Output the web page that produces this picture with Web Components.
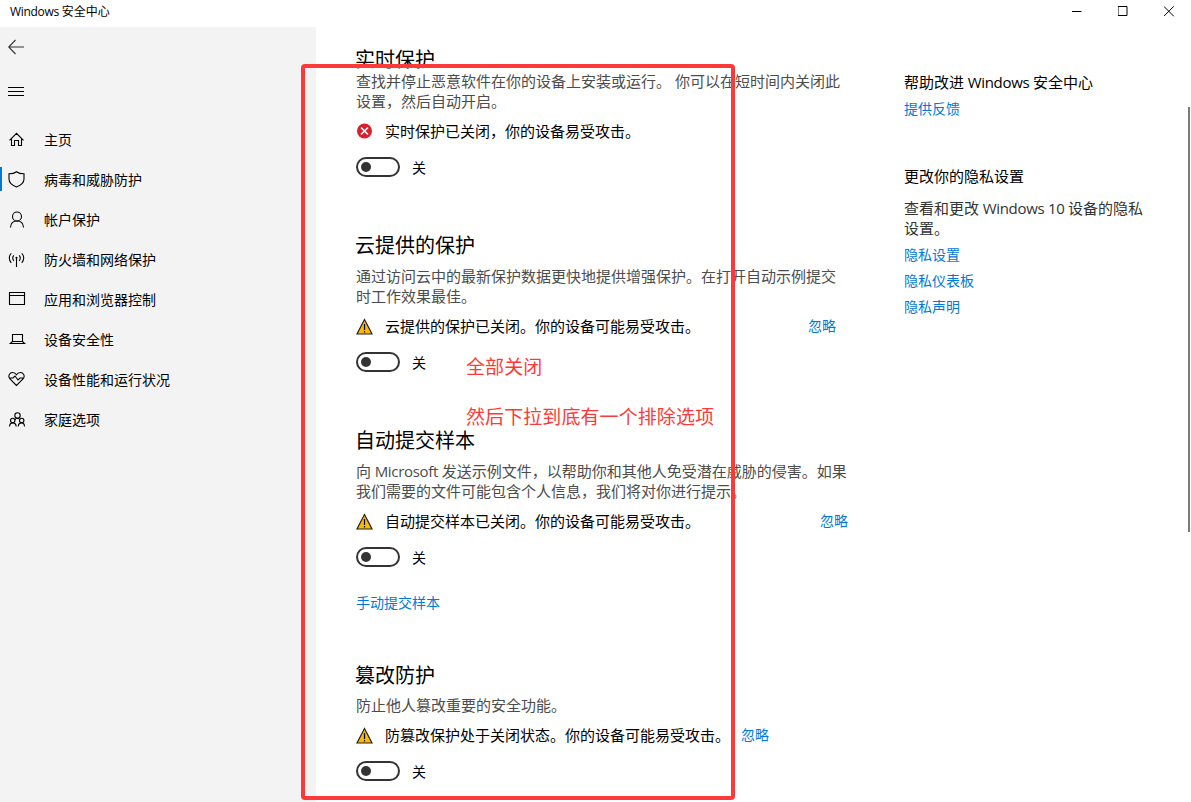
<!DOCTYPE html>
<html lang="zh-CN">
<head>
<meta charset="utf-8">
<title>Windows 安全中心</title>
<style>
    html, body {
        margin: 0;
        height: 100%;
        overflow: hidden;
        background: #fff;
    }
    body {
        font-family: "Open Sans", "Noto Sans CJK SC", sans-serif;
        font-size: 15px;
        line-height: 20px;
        color: #000;
    }
</style>
</head>
<body>
<security-app></security-app>

<script>
    const icons = {
        back: '<path d="M.5 8H16M7.500 1 .7 8l6.800 7" stroke="#333"/>',
        menu: '<path d="M0 4.500h16M0 8.500h16M0 12.500h16"/>',
        home: '<path d="M1.500 9.300 8.500 2.300l7 7M3.500 8v6.500h3v-5h4v5h3V8"/>',
        shield: '<path d="M8.500 .7C6.500 2.300 4 2.800 1 2.800V8c0 3.700 3 6.200 7.500 8C13 14.200 16 11.700 16 8V2.800c-3 0-5.500-.5-7.500-2.100z"/>',
        person: '<circle cx="9" cy="5.500" r="4.500"/><path d="M2.500 16.500c.2-3.900 2.800-6.500 6.500-6.500s6.300 2.600 6.500 6.500"/>',
        network: '<path d="M8.500 6.500V16M5.800 4.300c-1.200 1.500-1.200 4 0 5.500M11.200 4.300c1.200 1.500 1.200 4 0 5.500M3.300 2.300c-2.700 2.600-2.700 7 0 9.500M13.700 2.300c2.700 2.600 2.700 7 0 9.500"/><circle cx="8.500" cy="6.800" r=".5"/>',
        app: '<path d="M1.500 1.500h15v12h-15zM1.500 4.500h15"/>',
        laptop: '<path d="M4.500 3.500h10v7h-10zM4.500 10.500l-2.200 2h14.400l-2.200-2"/>',
        heart: '<path d="M8.500 14.500 2 8C-.5 5 1.500 1.500 4.700 1.500c1.800 0 3 1 3.800 2.300C9.300 2.500 10.500 1.500 12.300 1.500 15.500 1.500 17.500 5 15 8zM1.500 7H5l2-2 3 4 2-2h3"/>',
        family: '<circle cx="9.500" cy="4.500" r="2.700"/><circle cx="4.700" cy="9.500" r="2.200"/><circle cx="13.700" cy="9.500" r="2.200"/><path d="M1.500 15.500c.2-2.300 1.300-3.600 3.200-3.600s3.300 1.300 3.500 3.600M10.200 15.500c.2-2.300 1.400-3.600 3.500-3.600 1.700 0 2.700 1.300 2.800 3.600M6.800 9c.6-1.200 1.500-1.700 2.500-1.700s2 .5 2.600 1.700"/>'
    };

    const svg = (name, size = 18) =>
        `<svg width="${size}" height="${size}" viewBox="0 0 ${size} ${size}" fill="none" stroke="#000" stroke-width="1.100">${icons[name]}</svg>`;

    class TitleBar extends HTMLElement {
        connectedCallback() {
            this.attachShadow({mode: 'open'}).innerHTML = `
                <style>
                    :host {
                        display: flex;
                        justify-content: space-between;
                        height: 27px;
                        font-size: 12px;
                        line-height: 24px;
                        background: #fff;
                    }
                    .name { padding-left: 10px; }
                    .buttons { display: flex; height: 23px; margin-right: -1px; }
                    .buttons svg { padding: 6px 17.500px; fill: none; stroke: #000; }
                </style>
                <div class="name"><slot></slot></div>
                <div class="buttons">
                    <svg width="11" height="11"><path d="M0 5.500h10"/></svg>
                    <svg width="11" height="11"><path d="M.5 .5h9v9h-9z"/></svg>
                    <svg width="11" height="11"><path d="M.3 .3l10 10M10.300 .3l-10 10"/></svg>
                </div>
            `;
        }
    }

    // narrows Latin words that sit between Chinese characters
    class LatinText extends HTMLElement {
        connectedCallback() {
            this.attachShadow({mode: 'open'}).innerHTML = `
                <style>
                    :host { letter-spacing: -0.3px; }
                </style>
                <slot></slot>
            `;
        }
    }

    class NavItem extends HTMLElement {
        connectedCallback() {
            this.attachShadow({mode: 'open'}).innerHTML = `
                <style>
                    :host {
                        display: flex;
                        align-items: center;
                        height: 40px;
                        font-size: 14px;
                    }
                    .mark { width: 2px; height: 24px; margin: -2px 6px 0 0; }
                    :host([selected]) .mark { background: #0078d7; }
                    svg { display: block; width: 18px; margin-right: 18px; }
                </style>
                <span class="mark"></span>
                ${svg(this.getAttribute('icon'))}
                <slot></slot>
            `;
        }
    }

    class SideNav extends HTMLElement {
        constructor() {
            super();
            this.navItems = [
                {name: '主页', icon: 'home'},
                {name: '病毒和威胁防护', icon: 'shield', selected: true},
                {name: '帐户保护', icon: 'person'},
                {name: '防火墙和网络保护', icon: 'network'},
                {name: '应用和浏览器控制', icon: 'app'},
                {name: '设备安全性', icon: 'laptop'},
                {name: '设备性能和运行状况', icon: 'heart'},
                {name: '家庭选项', icon: 'family'}
            ];
        }
        connectedCallback() {
            let nav = '';
            this.navItems.forEach(item => {
                nav += `<nav-item icon="${item.icon}" ${item.selected ? 'selected' : ''}>${item.name}</nav-item>`;
            });
            this.attachShadow({mode: 'open'}).innerHTML = `
                <style>
                    :host {
                        display: block;
                        width: 316px;
                        flex: none;
                        background: #f3f3f3;
                    }
                    .top {
                        display: grid;
                        gap: 28px;
                        padding: 12px 0 0 8px;
                        height: 81px;
                        align-content: start;
                    }
                    .top svg { display: block; }
                </style>
                <div class="top">${svg('back', 16)}${svg('menu', 16)}</div>
                <nav>${nav}</nav>
            `;
        }
    }

    class TextLink extends HTMLElement {
        connectedCallback() {
            this.attachShadow({mode: 'open'}).innerHTML = `
                <style>
                    :host { display: block; font-size: 14px; }
                    a { color: #0078d7; text-decoration: none; }
                </style>
                <a href="#"><slot></slot></a>
            `;
        }
    }

    class ToggleSwitch extends HTMLElement {
        connectedCallback() {
            this.attachShadow({mode: 'open'}).innerHTML = `
                <style>
                    :host {
                        display: flex;
                        gap: 12px;
                        height: 20px;
                        font-size: 14px;
                        line-height: 22px;
                    }
                    .track {
                        box-sizing: border-box;
                        display: flex;
                        align-items: center;
                        width: 44px;
                        height: 20px;
                        padding-left: 3px;
                        border: 2px solid #333;
                        border-radius: 10px;
                    }
                    .knob { width: 10px; height: 10px; border-radius: 50%; background: #333; }
                </style>
                <span class="track"><span class="knob"></span></span>
                <slot></slot>
            `;
        }
    }

    class StatusIcon extends HTMLElement {
        connectedCallback() {
            const error = `
                <circle cx="8.500" cy="8" r="7.500" fill="#da1f2a"/>
                <path d="M5 4.500l7 7M12 4.500l-7 7" stroke="#fff" stroke-width="1.700"/>`;
            const warning = `
                <path d="M8.500 1.500 16 16H1z" fill="#ffb900" stroke="#222" stroke-width="1.200"/>
                <path d="M8.500 6v6M8.500 13v1.500" stroke="#000" stroke-width="1.200"/>`;
            this.attachShadow({mode: 'open'}).innerHTML = `
                <style>
                    :host { display: block; width: 17px; height: 17px; }
                    svg { display: block; }
                </style>
                <svg width="17" height="17" fill="none">${this.getAttribute('type') === 'error' ? error : warning}</svg>
            `;
        }
    }

    class ProtectionSection extends HTMLElement {
        connectedCallback() {
            const ignore = this.hasAttribute('ignorable') ? '<text-link>忽略</text-link>' : '';
            this.attachShadow({mode: 'open'}).innerHTML = `
                <style>
                    :host { display: block; width: var(--section-width, 492px); white-space: nowrap; }
                    h2 {
                        margin: 0 0 var(--heading-gap, 6px) -1px;
                        padding-top: var(--heading-top, 1px);
                        font-size: 20px;
                        font-weight: 400;
                        line-height: 28px;
                    }
                    .about { color: #4c4c4c; }
                    .status {
                        display: flex;
                        align-items: center;
                        height: 20px;
                        margin: 10px 0 16px;
                    }
                    status-icon { margin-right: 12px; }
                    text-link { margin-left: auto; }
                </style>
                <h2>${this.getAttribute('heading')}</h2>
                <div class="about"><slot></slot></div>
                <div class="status">
                    <status-icon type="${this.getAttribute('type')}"></status-icon>
                    <span>${this.getAttribute('status')}</span>
                    ${ignore}
                </div>
                <toggle-switch>关</toggle-switch>
                <slot name="more"></slot>
            `;
        }
    }

    class HelpPanel extends HTMLElement {
        connectedCallback() {
            this.attachShadow({mode: 'open'}).innerHTML = `
                <style>
                    :host { display: block; white-space: nowrap; }
                    h3 { margin: 0; font-size: 15px; font-weight: 400; }
                    p { margin: 12px 0 0; color: #333; }
                    text-link { margin-top: 6px; }
                    h3 + text-link, p + text-link { margin-top: 7px; }
                    .privacy { margin-top: 47px; }
                </style>
                <section>
                    <h3>帮助改进<latin-text> Windows </latin-text>安全中心</h3>
                    <text-link>提供反馈</text-link>
                </section>
                <section class="privacy">
                    <h3>更改你的隐私设置</h3>
                    <p>查看和更改<latin-text> Windows 10 </latin-text>设备的隐私<br>设置。</p>
                    <text-link>隐私设置</text-link>
                    <text-link>隐私仪表板</text-link>
                    <text-link>隐私声明</text-link>
                </section>
            `;
        }
    }

    // red frame and notes drawn over the window
    class MarkupLayer extends HTMLElement {
        connectedCallback() {
            this.attachShadow({mode: 'open'}).innerHTML = `
                <style>
                    :host {
                        position: absolute;
                        box-sizing: border-box;
                        left: 301px;
                        top: 64px;
                        width: 434px;
                        height: 736px;
                        border: 4px solid #fd3a3a;
                        border-radius: 4px;
                        color: #fd3a3a;
                        font-size: 19px;
                        letter-spacing: 0.08px;
                        line-height: 28px;
                        white-space: nowrap;
                        pointer-events: none;
                    }
                    .notes { display: grid; gap: 22px; padding: 285px 0 0 161px; }
                </style>
                <div class="notes">
                    <span>全部关闭</span>
                    <span>然后下拉到底有一个排除选项</span>
                </div>
            `;
        }
    }

    class SecurityApp extends HTMLElement {
        connectedCallback() {
            this.attachShadow({mode: 'open'}).innerHTML = `
                <style>
                    :host {
                        position: relative;
                        display: flex;
                        flex-direction: column;
                        height: 100vh;
                        overflow: hidden;
                    }
                    .body { display: flex; flex: 1; min-height: 0; }
                    main { display: flex; flex: 1; padding-left: 40px; }
                    .sections { width: 548px; padding-top: 17px; flex: none; }
                    protection-section { margin-bottom: 54px; }
                    .realtime { --heading-top: 2px; --heading-gap: -3px; }
                    .cloud { --section-width: 480px; }
                    .samples { margin-bottom: 48px; }
                    .tamper { --section-width: 413px; --heading-gap: 5px; }
                    .samples text-link { margin-top: 26px; }
                    help-panel { padding-top: 45px; }
                    .scroll {
                        width: 2px;
                        height: 425px;
                        margin: 80px 1px 0 auto;
                        background: #7a7a7a;
                    }
                </style>
                <title-bar><latin-text>Windows </latin-text>安全中心</title-bar>
                <div class="body">
                    <side-nav></side-nav>
                    <main>
                        <div class="sections">
                            <protection-section class="realtime" type="error" heading="实时保护"
                                status="实时保护已关闭，你的设备易受攻击。">查找并停止恶意软件在你的设备上安装或运行。 你可以在短时间内关闭此<br>设置，然后自动开启。</protection-section>
                            <protection-section class="cloud" type="warning" heading="云提供的保护" ignorable
                                status="云提供的保护已关闭。你的设备可能易受攻击。">通过访问云中的最新保护数据更快地提供增强保护。在打开自动示例提交<br>时工作效果最佳。</protection-section>
                            <protection-section class="samples" type="warning" heading="自动提交样本" ignorable
                                status="自动提交样本已关闭。你的设备可能易受攻击。">向<latin-text> Microsoft </latin-text>发送示例文件，以帮助你和其他人免受潜在威胁的侵害。如果<br>我们需要的文件可能包含个人信息，我们将对你进行提示。<text-link slot="more">手动提交样本</text-link></protection-section>
                            <protection-section class="tamper" type="warning" heading="篡改防护" ignorable
                                status="防篡改保护处于关闭状态。你的设备可能易受攻击。">防止他人篡改重要的安全功能。</protection-section>
                        </div>
                        <help-panel></help-panel>
                        <div class="scroll"></div>
                    </main>
                </div>
                <markup-layer></markup-layer>
            `;
        }
    }

    customElements.define('latin-text', LatinText);
    customElements.define('title-bar', TitleBar);
    customElements.define('nav-item', NavItem);
    customElements.define('side-nav', SideNav);
    customElements.define('text-link', TextLink);
    customElements.define('toggle-switch', ToggleSwitch);
    customElements.define('status-icon', StatusIcon);
    customElements.define('protection-section', ProtectionSection);
    customElements.define('help-panel', HelpPanel);
    customElements.define('markup-layer', MarkupLayer);
    customElements.define('security-app', SecurityApp);
</script>
</body>
</html>
